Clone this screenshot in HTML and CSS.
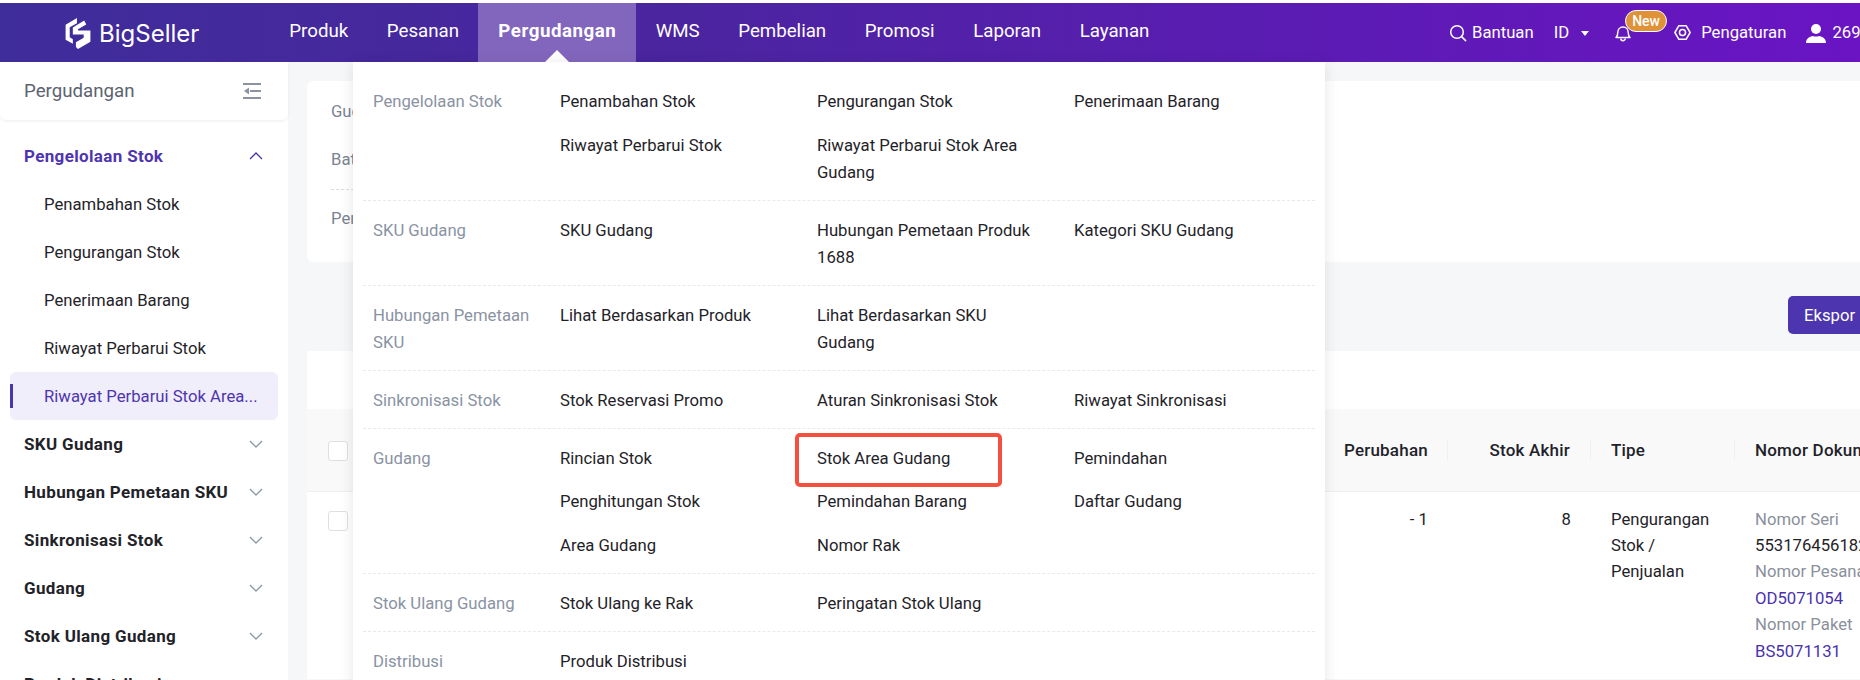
FILE: index.html
```html
<!DOCTYPE html>
<html lang="en">
<head>
  <meta charset="UTF-8" />
  <title>BigSeller</title>
  <link rel="stylesheet" href="styles.css">
</head>
<body>
  <div class="page">
    <header class="topbar">
      <a class="logo">
        <svg class="logo-mark" viewBox="0 0 24 30" width="26" height="31">
          <path d="M11 0 0 6.500V21l7 4v-4.500l-3-1.800V9l7-4z" fill="#fff"/>
          <path d="M18 2.500 7 9.200V16h10.500v3L10 23.500V28l2 2 12-7V12H12v-1l8-4.600z" fill="#fff"/>
        </svg>
        <span class="logo-text">BigSeller</span>
      </a>
      <nav class="nav">
        <a class="nav-item">Produk</a>
        <a class="nav-item">Pesanan</a>
        <a class="nav-item active">Pergudangan</a>
        <a class="nav-item">WMS</a>
        <a class="nav-item">Pembelian</a>
        <a class="nav-item">Promosi</a>
        <a class="nav-item">Laporan</a>
        <a class="nav-item">Layanan</a>
      </nav>
      <div class="top-right">
        <span class="top-link help">
          <svg viewBox="0 0 18 18" width="18" height="18" fill="none" stroke="#fff" stroke-width="1.5"><circle cx="8" cy="8" r="6.3"/><path d="m12.6 12.6 4 4" stroke-linecap="round"/></svg>
          Bantuan
        </span>
        <span class="top-link lang">ID<i class="lang-caret"></i></span>
        <span class="bell">
          <svg viewBox="0 0 18 18" width="18" height="18" fill="none" stroke="#fff" stroke-width="1.5"><path d="M2 13.500c1.300-1 1.700-2.200 1.700-4.500C3.700 5.700 5.800 3 9 3s5.300 2.700 5.300 6c0 2.300.4 3.500 1.700 4.500z" stroke-linejoin="round"/><path d="M6.800 14.500a2.200 2.200 0 0 0 4.400 0"/></svg>
          <em class="badge">New</em>
        </span>
        <span class="top-link settings">
          <svg viewBox="0 0 20 20" width="19" height="19" fill="none" stroke="#fff" stroke-width="1.600"><path d="M6.200 2.800h7.600L18 10l-4.200 7.200H6.200L2 10z" stroke-linejoin="round"/><circle cx="10" cy="10" r="3.200"/></svg>
          Pengaturan
        </span>
        <span class="top-link user">
          <svg viewBox="0 0 20 20" width="20" height="20" fill="#fff"><circle cx="10" cy="6" r="5"/><path d="M0 20c0-4.500 3.500-6.500 7-7 1.800.8 4.200.8 6 0 3.500.5 7 2.500 7 7z"/></svg>
          2691
        </span>
      </div>
    </header>

    <div class="layout">
      <aside class="sidebar">
        <div class="side-head">
          <span>Pergudangan</span>
          <svg viewBox="0 0 18 16" width="18" height="16" fill="#8b93a3"><rect y="0" width="18" height="2"/><rect y="14" width="18" height="2"/><rect x="7" y="7" width="11" height="2"/><path d="M1 8l5-3.500v7z"/></svg>
        </div>
        <ul class="side-menu">
          <li class="group open">Pengelolaan Stok
            <svg class="chev" viewBox="0 0 14 8" width="14" height="8"><path d="M1 7l6-6 6 6" fill="none" stroke="currentColor" stroke-width="1.300"/></svg>
          </li>
          <li class="sub">Penambahan Stok</li>
          <li class="sub">Pengurangan Stok</li>
          <li class="sub">Penerimaan Barang</li>
          <li class="sub">Riwayat Perbarui Stok</li>
          <li class="sub current">Riwayat Perbarui Stok Area...</li>
          <li class="group">SKU Gudang
            <svg class="chev" viewBox="0 0 14 8" width="14" height="8"><path d="M1 1l6 6 6-6" fill="none" stroke="currentColor" stroke-width="1.300"/></svg>
          </li>
          <li class="group">Hubungan Pemetaan SKU
            <svg class="chev" viewBox="0 0 14 8" width="14" height="8"><path d="M1 1l6 6 6-6" fill="none" stroke="currentColor" stroke-width="1.300"/></svg>
          </li>
          <li class="group">Sinkronisasi Stok
            <svg class="chev" viewBox="0 0 14 8" width="14" height="8"><path d="M1 1l6 6 6-6" fill="none" stroke="currentColor" stroke-width="1.300"/></svg>
          </li>
          <li class="group">Gudang
            <svg class="chev" viewBox="0 0 14 8" width="14" height="8"><path d="M1 1l6 6 6-6" fill="none" stroke="currentColor" stroke-width="1.300"/></svg>
          </li>
          <li class="group">Stok Ulang Gudang
            <svg class="chev" viewBox="0 0 14 8" width="14" height="8"><path d="M1 1l6 6 6-6" fill="none" stroke="currentColor" stroke-width="1.300"/></svg>
          </li>
          <li class="group">Produk Distribusi
            <svg class="chev" viewBox="0 0 14 8" width="14" height="8"><path d="M1 1l6 6 6-6" fill="none" stroke="currentColor" stroke-width="1.300"/></svg>
          </li>
        </ul>
      </aside>

      <main class="content">
        <section class="filter-card">
          <div class="filter-row">Gudang</div>
          <div class="filter-row">Batas</div>
          <div class="filter-line"></div>
          <div class="filter-row">Pencarian</div>
        </section>
        <div class="toolbar">
          <button class="btn-primary">Ekspor</button>
        </div>
        <section class="table-card">
          <div class="table-top"></div>
          <table class="stock-table">
            <colgroup>
              <col class="c-check"><col class="c-hidden"><col class="c-change"><col class="c-end"><col class="c-type"><col class="c-doc">
            </colgroup>
            <thead>
              <tr>
                <th><span class="check"></span></th>
                <th></th>
                <th class="num"><span class="th-in">Perubahan</span></th>
                <th class="num"><span class="th-in">Stok Akhir</span></th>
                <th><span class="th-in">Tipe</span></th>
                <th><span class="th-in last">Nomor Dokumen</span></th>
              </tr>
            </thead>
            <tbody>
              <tr>
                <td><span class="check"></span></td>
                <td></td>
                <td class="num">- 1</td>
                <td class="num">8</td>
                <td>Pengurangan Stok / Penjualan</td>
                <td>
                  <div class="muted">Nomor Seri</div>
                  <div>553176456182</div>
                  <div class="muted">Nomor Pesanan</div>
                  <div class="link">OD5071054</div>
                  <div class="muted">Nomor Paket</div>
                  <div class="link">BS5071131</div>
                </td>
              </tr>
            </tbody>
          </table>
        </section>
      </main>
    </div>

    <!-- dropdown of the Pergudangan tab -->
    <div class="mega">
      <div class="mega-row">
        <div class="mega-label">Pengelolaan Stok</div>
        <div class="mega-links">
          <a>Penambahan Stok</a><a>Pengurangan Stok</a><a>Penerimaan Barang</a>
          <a>Riwayat Perbarui Stok</a><a>Riwayat Perbarui Stok Area Gudang</a>
        </div>
      </div>
      <div class="mega-row">
        <div class="mega-label">SKU Gudang</div>
        <div class="mega-links">
          <a>SKU Gudang</a><a>Hubungan Pemetaan Produk 1688</a><a>Kategori SKU Gudang</a>
        </div>
      </div>
      <div class="mega-row">
        <div class="mega-label">Hubungan Pemetaan SKU</div>
        <div class="mega-links">
          <a>Lihat Berdasarkan Produk</a><a>Lihat Berdasarkan SKU Gudang</a>
        </div>
      </div>
      <div class="mega-row">
        <div class="mega-label">Sinkronisasi Stok</div>
        <div class="mega-links">
          <a>Stok Reservasi Promo</a><a>Aturan Sinkronisasi Stok</a><a>Riwayat Sinkronisasi</a>
        </div>
      </div>
      <div class="mega-row">
        <div class="mega-label">Gudang</div>
        <div class="mega-links">
          <a>Rincian Stok</a><a class="marked">Stok Area Gudang</a><a>Pemindahan</a>
          <a>Penghitungan Stok</a><a>Pemindahan Barang</a><a>Daftar Gudang</a>
          <a>Area Gudang</a><a>Nomor Rak</a>
        </div>
      </div>
      <div class="mega-row">
        <div class="mega-label">Stok Ulang Gudang</div>
        <div class="mega-links">
          <a>Stok Ulang ke Rak</a><a>Peringatan Stok Ulang</a>
        </div>
      </div>
      <div class="mega-row">
        <div class="mega-label">Distribusi</div>
        <div class="mega-links">
          <a>Produk Distribusi</a>
        </div>
      </div>
    </div>
  </div>
</body>
</html>
```

FILE: styles.css
```css
*, *::before, *::after {
  box-sizing: border-box;
}
html, body {
  margin: 0;
  height: 100%;
  overflow: hidden;
}
body {
  font-family: Roboto, "Liberation Sans", sans-serif;
  font-size: 16.7px;
  color: #1f2329;
  background: #f6f7f9;
}
.page {
  position: relative;
  height: 680px;
  overflow: hidden;
  border-top: 3px solid #fff;
}

/* top bar */
.topbar {
  display: flex;
  align-items: center;
  height: 59px;
  background: linear-gradient(90deg, #3f2d9a 0%, #4a259f 35%, #6a14c4 100%);
  color: #fff;
  overflow: hidden;
}
.logo {
  display: flex;
  align-items: center;
  gap: 8px;
  width: 270px;
  padding: 2px 0 0 65px;
  flex-shrink: 0;
}
.logo-text {
  font-family: Inter, sans-serif;
  font-size: 24px;
}
.nav {
  display: flex;
  height: 100%;
}
.nav-item {
  position: relative;
  display: flex;
  align-items: center;
  height: 100%;
  padding: 0 19.300px 3px;
  font-size: 18.700px;
}
.nav-item.active {
  padding: 0 20px 3px;
  font-weight: 700;
  letter-spacing: 0.55px;
  background: #8266bd;
}
.nav-item.active::after {
  content: "";
  position: absolute;
  left: 50%;
  bottom: 0;
  margin-left: -12px;
  border-left: 12px solid transparent;
  border-right: 12px solid transparent;
  border-bottom: 12px solid #fff;
}
.top-right {
  display: flex;
  align-items: center;
  margin-left: auto;
  width: 411px;
  flex-shrink: 0;
  white-space: nowrap;
}
.top-link {
  display: flex;
  align-items: center;
}
.help {
  gap: 5px;
}
.lang {
  margin-left: 20px;
}
.lang-caret {
  margin: 2px 0 0 12px;
  border-left: 4px solid transparent;
  border-right: 4px solid transparent;
  border-top: 5px solid #fff;
}
.bell {
  position: relative;
  display: flex;
  margin-left: 25px;
}
.badge {
  position: absolute;
  left: 11px;
  top: -14px;
  padding: 0 6px;
  height: 22px;
  line-height: 20px;
  font-size: 14px;
  font-style: normal;
  font-weight: 500;
  background: #e09238;
  border: 1px solid #fff;
  border-radius: 11px;
}
.settings {
  gap: 9px;
  margin-left: 41px;
}
.user {
  gap: 6px;
  margin-left: 20px;
}

/* sidebar and page */
.layout {
  display: flex;
  height: 618px;
}
.sidebar {
  width: 288px;
  flex-shrink: 0;
  background: #fff;
}
.side-head {
  display: flex;
  align-items: center;
  justify-content: space-between;
  height: 58px;
  padding: 0 27px 0 24px;
  font-size: 18.700px;
  color: #5c6370;
  border-radius: 0 0 6px 6px;
  box-shadow: 0 1px 3px rgba(0,0,0,0.07);
}
.side-menu {
  list-style: none;
  margin: 0;
  padding: 12px 0 0;
}
.side-menu li {
  display: flex;
  align-items: center;
  height: 48px;
  white-space: nowrap;
}
.group {
  justify-content: space-between;
  padding: 0 25px 0 24px;
  font-size: 17px;
  font-weight: 700;
  letter-spacing: 0.35px;
}
.group .chev {
  color: #8d95a5;
}
.group.open {
  color: #4e35b0;
}
.group.open .chev {
  color: #4e35b0;
}
.sub {
  padding-left: 44px;
}
.sub.current {
  position: relative;
  margin-left: 10px;
  width: 268px;
  padding-left: 34px;
  color: #4e35b0;
  background: #f1eefc;
  border-radius: 6px;
}
.sub.current::before {
  content: "";
  position: absolute;
  left: 0;
  top: 12px;
  width: 3px;
  height: 24px;
  background: #4e35b0;
}

.content {
  flex: 1;
  min-width: 0;
  padding: 19px 0 0 19px;
  overflow: hidden;
}
.filter-card {
  height: 181px;
  padding: 18px 24px 0;
  background: #fff;
  border-radius: 6px 0 0 6px;
  color: #7b8494;
}
.filter-row {
  height: 26px;
  line-height: 26px;
  margin-bottom: 22px;
}
.filter-line {
  width: 200px;
  margin: -6px 0 16px;
  border-top: 1px dashed #ddd;
}
.toolbar {
  display: flex;
  height: 89px;
  padding-top: 34px;
  justify-content: flex-end;
}
.btn-primary {
  width: 84px;
  height: 38px;
  margin-right: -12px;
  padding: 0 0 0 16px;
  text-align: left;
  font: inherit;
  color: #fff;
  background: #4c35af;
  border: 0;
  border-radius: 5px;
}
.table-card {
  background: #fff;
}
.table-top {
  height: 58px;
}
.stock-table {
  table-layout: fixed;
  width: 1729px;
  border-collapse: collapse;
}
.c-check { width: 60px; }
.c-hidden { width: 957px; }
.c-change { width: 124px; }
.c-end { width: 143px; }
.c-type { width: 144px; }
.c-doc { width: 301px; }
.stock-table th {
  height: 82px;
  padding: 1px 0 0;
  font-size: 17px;
  font-weight: 500;
  letter-spacing: 0.2px;
  text-align: left;
  background: #f9f9fa;
  border-bottom: 1px solid #eeeff1;
}
.stock-table th .check {
  margin-left: 21px;
  vertical-align: middle;
}
.stock-table th.num {
  text-align: right;
}
.th-in {
  display: block;
  padding: 0 20px;
  line-height: 20px;
  border-right: 1px solid #eeeff1;
  white-space: nowrap;
}
.th-in.last {
  border-right: 0;
}
.stock-table td {
  padding: 15px 20px 14px;
  line-height: 26.400px;
  vertical-align: top;
  white-space: normal;
}
.stock-table td:first-child {
  padding: 19px 0 0 21px;
}
.stock-table td.num {
  text-align: right;
}
.check {
  display: inline-block;
  width: 20px;
  height: 20px;
  background: #fff;
  border: 1.5px solid #dcdfe4;
  border-radius: 3px;
}
.muted {
  color: #8a909c;
}
.link {
  color: #4a32ad;
}

/* mega menu over the page */
.mega {
  position: absolute;
  left: 353px;
  top: 59px;
  width: 972px;
  height: 640px;
  padding: 10px 10px 0;
  background: #fff;
  box-shadow: 0 2px 14px rgba(0,0,0,0.10);
}
.mega-row {
  display: flex;
  padding: 16px 0 14px;
  border-bottom: 1px dashed #e8e9ec;
}
.mega-row:last-child {
  border-bottom: 0;
}
.mega-label {
  width: 197px;
  padding-left: 10px;
  padding-right: 30px;
  flex-shrink: 0;
  line-height: 27px;
  color: #8a93a3;
}
.mega-links {
  flex: 1;
  display: grid;
  grid-template-columns: repeat(3, 257px);
  row-gap: 16.500px;
  align-items: start;
}
.mega-links a {
  line-height: 27px;
  padding-right: 30px;
}
.mega-links .marked {
  position: relative;
}
.marked::after {
  content: "";
  position: absolute;
  left: -22px;
  top: -12px;
  width: 207px;
  height: 54px;
  border: 4px solid #f4503f;
  border-radius: 5px;
}
```
